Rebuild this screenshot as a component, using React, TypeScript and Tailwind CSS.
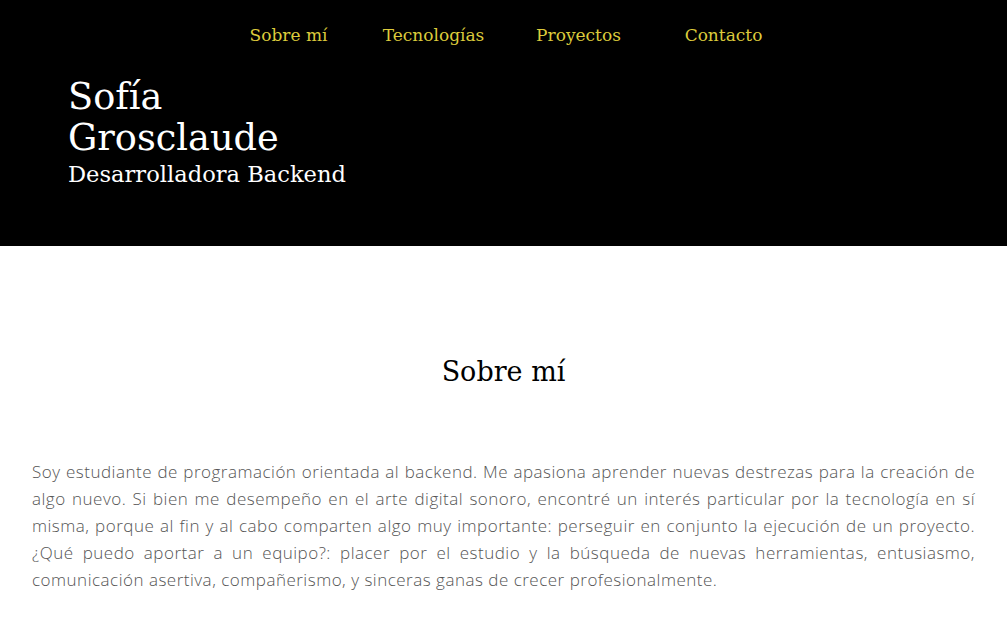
import React from "react"

const links = ["Sobre mí", "Tecnologías", "Proyectos", "Contacto"]

const lines = [
  "Soy estudiante de programación orientada al backend. Me apasiona aprender nuevas destrezas para la creación de",
  "algo nuevo. Si bien me desempeño en el arte digital sonoro, encontré un interés particular por la tecnología en sí",
  "misma, porque al fin y al cabo comparten algo muy importante: perseguir en conjunto la ejecución de un proyecto.",
  "¿Qué puedo aportar a un equipo?: placer por el estudio y la búsqueda de nuevas herramientas, entusiasmo,",
]

export default function App() {
  return (
    <div className="min-h-screen bg-white" style={{ fontFamily: "'DejaVu Serif', serif" }}>
      {/* Header */}
      <header className="bg-black h-[246px] flex flex-col">
        <nav className="flex justify-center pt-[23px] pl-[5px]">
          <ul className="flex">
            {links.map((l) => (
              <li key={l} className="w-[145px] text-center">
                <a href="#" className="text-[#dccb3c] text-[17px] leading-6">
                  {l}
                </a>
              </li>
            ))}
          </ul>
        </nav>
        <div className="pl-[68px] pt-[28px] text-white">
          <h1 className="text-[36.7px] leading-[41px]">
            Sofía
            <br />
            Grosclaude
          </h1>
          <h2 className="text-[22.6px] leading-[30px] mt-[1px]">Desarrolladora Backend</h2>
        </div>
      </header>

      {/* Sobre mí */}
      <section className="px-8 pt-[108px] pb-10">
        <h2 className="text-center text-[27px] leading-9 text-black">Sobre mí</h2>
        <p
          className="mt-[68px] text-[17px] leading-[27px] text-[#555] font-light tracking-[0.5px]"
          style={{ fontFamily: "'Open Sans', sans-serif" }}
        >
          {lines.map((t) => (
            <span key={t} className="block text-justify [text-align-last:justify] whitespace-nowrap">
              {t}
            </span>
          ))}
          <span className="block">
            comunicación asertiva, compañerismo, y sinceras ganas de crecer profesionalmente.
          </span>
        </p>
      </section>
    </div>
  )
}
